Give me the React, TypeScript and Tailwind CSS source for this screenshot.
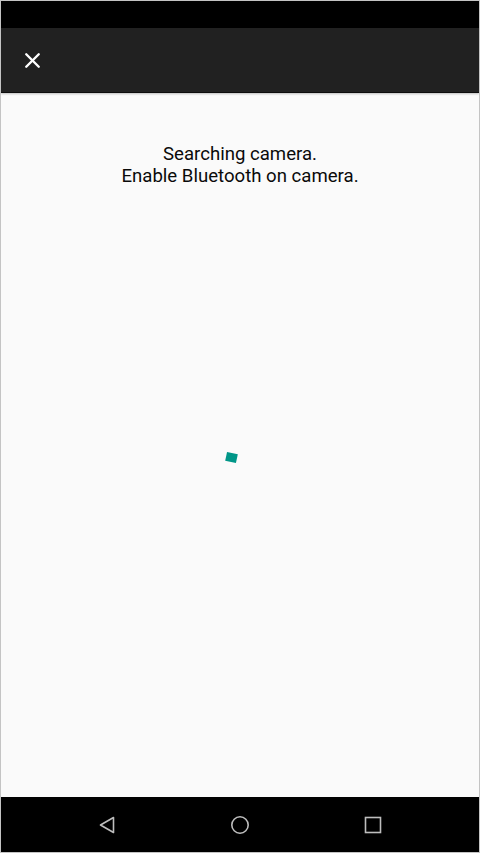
import { X } from "lucide-react";

export default function App() {
  return (
    <div
      className="w-[480px] h-[853px] flex flex-col border border-[#c4c4c4] bg-[#fafafa] overflow-hidden"
      style={{ fontFamily: "Roboto, 'Liberation Sans', sans-serif" }}
    >
      {/* status bar */}
      <div className="h-[27px] bg-black shrink-0" />

      {/* toolbar */}
      <div className="h-[65px] bg-[#212121] shrink-0 flex items-center px-[19px] border-b border-[#0e0e0e] shadow-[0_1px_2px_rgba(0,0,0,0.25)]">
        <X className="w-[25px] h-[25px] text-white" strokeWidth={2.3} />
      </div>

      {/* content */}
      <div className="flex-1 flex flex-col items-center pt-[50px] relative">
        <div className="text-center text-[18.6px] leading-[22px] text-[#0a0a0a]">
          <div>Searching camera.</div>
          <div>Enable Bluetooth on camera.</div>
        </div>
        <div className="flex-1 flex items-center justify-center pb-[70px] pr-[18px]">
          <div className="w-[11px] h-[9px] bg-[#009688] rotate-[12deg]" />
        </div>
      </div>

      {/* nav bar */}
      <div className="h-[55px] bg-black shrink-0 flex items-center justify-center gap-[114px]">
        <svg width="18" height="18" viewBox="0 0 18 18">
          <path d="M15.5 1.5 L2.5 9 L15.5 16.5 Z" fill="none" stroke="#bdbdbd" strokeWidth="1.6" strokeLinejoin="round" />
        </svg>
        <svg width="20" height="20" viewBox="0 0 20 20">
          <circle cx="10" cy="10" r="8.2" fill="none" stroke="#bdbdbd" strokeWidth="1.6" />
        </svg>
        <svg width="18" height="18" viewBox="0 0 18 18">
          <rect x="1.5" y="1.5" width="15" height="15" fill="none" stroke="#bdbdbd" strokeWidth="1.6" />
        </svg>
      </div>
    </div>
  );
}
